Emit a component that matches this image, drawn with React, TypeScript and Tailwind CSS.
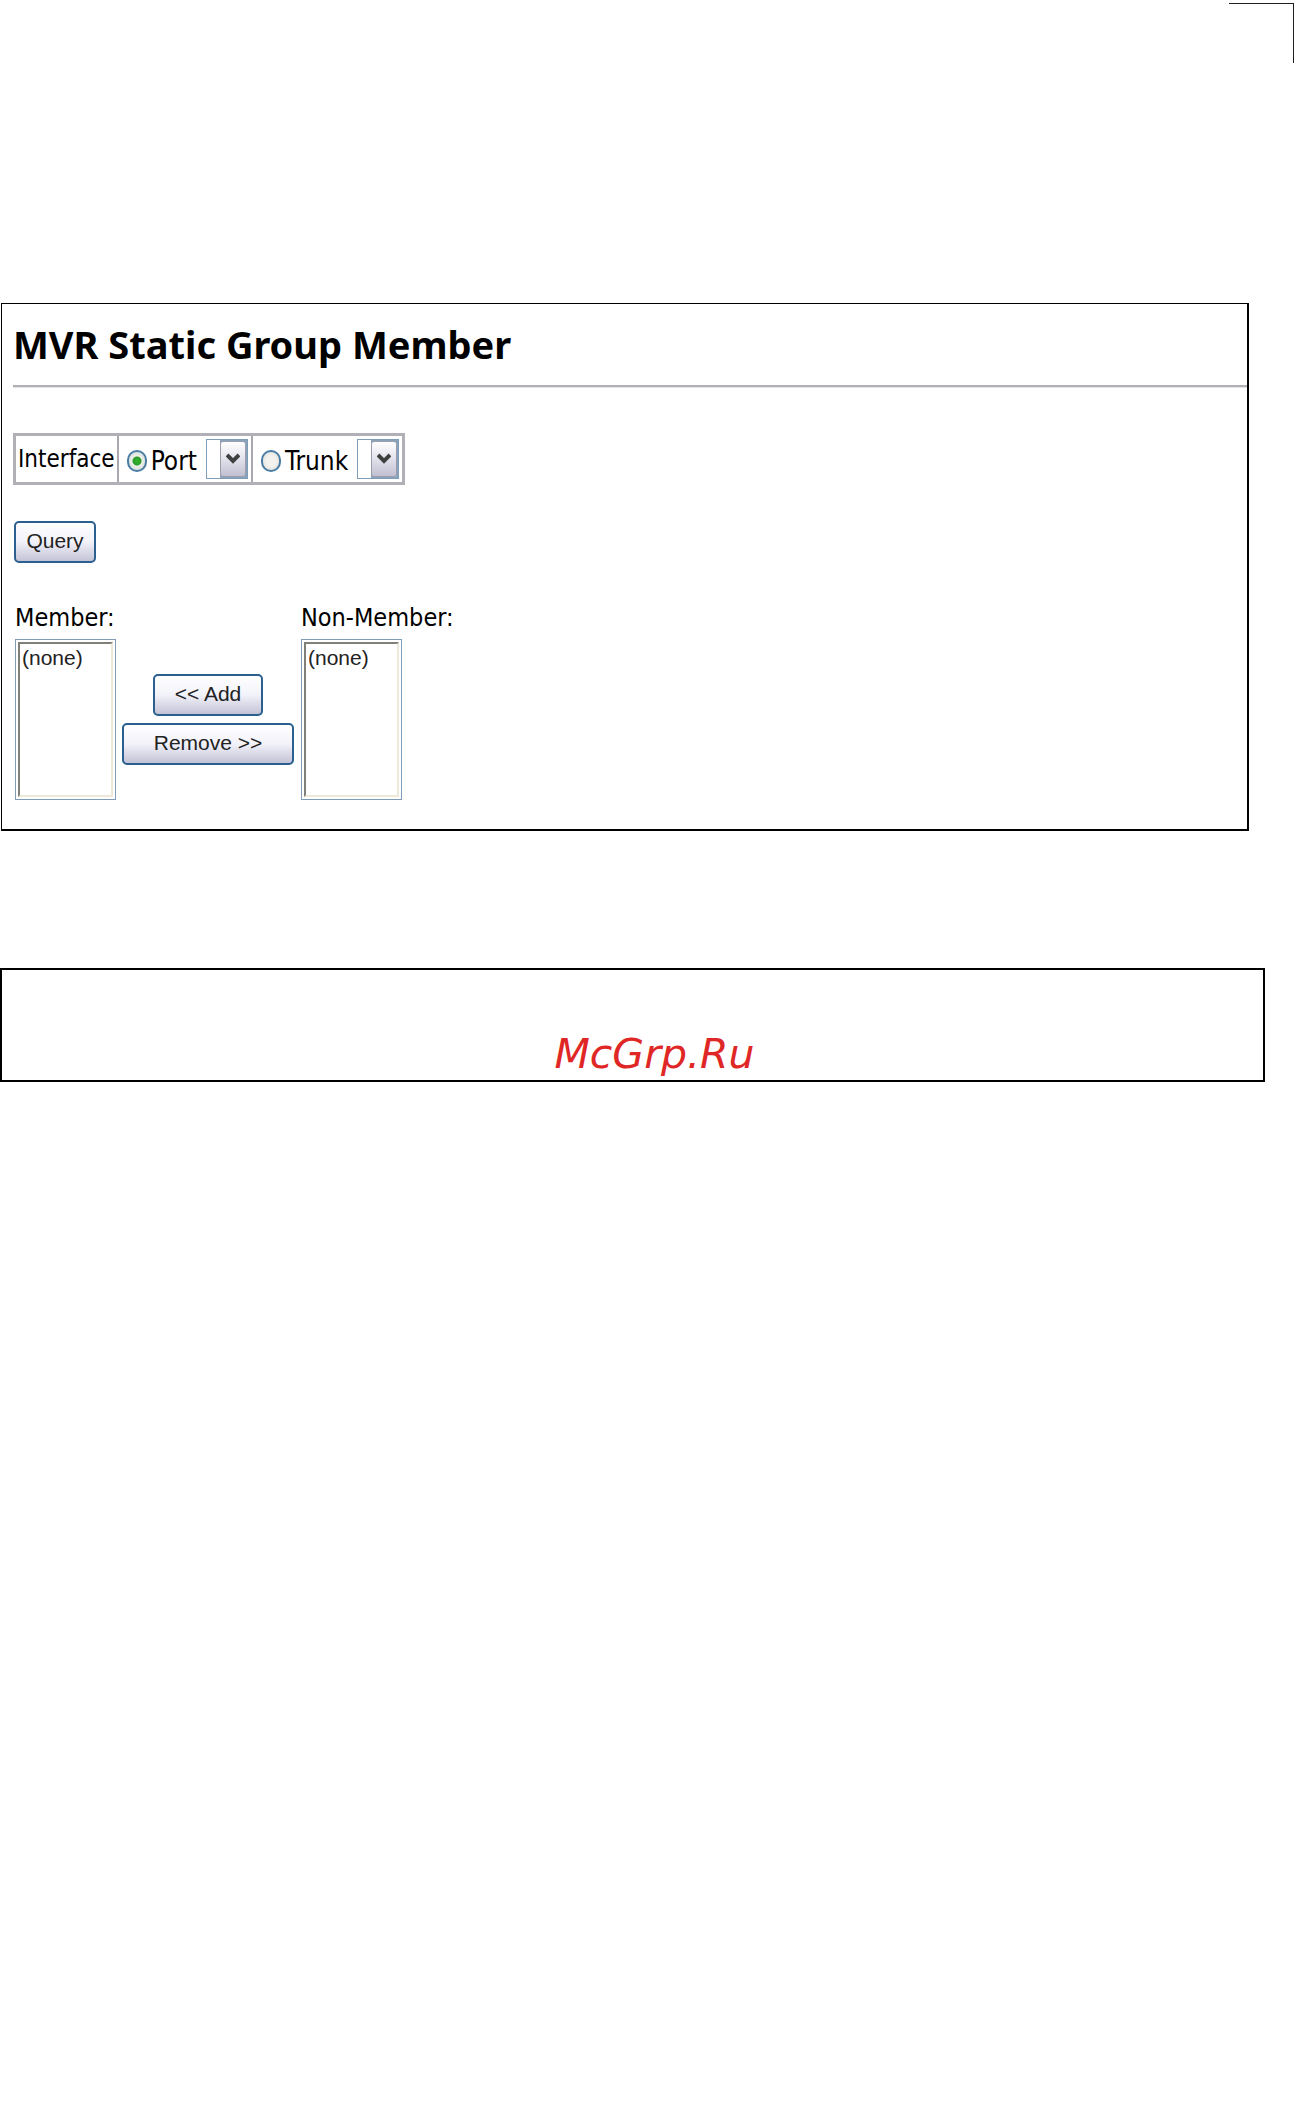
import { useState } from 'react';

const UI_FONT = "font-['DejaVu_Sans_Condensed','DejaVu_Sans',sans-serif]";
const CONTROL_FONT = "font-['Liberation_Sans',Arial,sans-serif]";

interface InterfaceOptionProps {
  id: string;
  label: string;
  checked: boolean;
  onSelect: () => void;
}

function InterfaceOption({ id, label, checked, onSelect }: InterfaceOptionProps) {
  return (
    <div className="flex items-center">
      <div className="flex items-center pt-1">
        <input
          id={id}
          type="radio"
          name="interface"
          checked={checked}
          onChange={onSelect}
          className="h-[22px] w-5 appearance-none rounded-full border-2 border-[#4a7da5] bg-[radial-gradient(#f3f2ee_40%,#dcdcd7)] checked:bg-[radial-gradient(circle,#35b52f_0,#2c9c28_4px,#eef0ea_5px,#dfe3de_8px)]"
        />
        <label htmlFor={id} className="ml-1 text-[26px] leading-7">
          {label}
        </label>
      </div>
      <div className="relative ml-[9px] h-10 w-[42px] border border-[#7f9db9] bg-white">
        <select aria-label={`${label} number`} className="h-full w-full appearance-none bg-transparent" />
        <span className="pointer-events-none absolute inset-y-0 right-0 flex w-[27px] bg-[#8aa3bd] py-px pr-px">
          <span className="flex flex-1 items-center justify-center rounded-[3px] border border-[#9c9cac] bg-linear-to-b from-white via-[#e2e2ec] to-[#c0c0d2]">
            <svg width="14" height="12" viewBox="0 0 14 12" fill="none" stroke="#404040" strokeWidth="4">
              <path d="M1 2l6 6 6-6" />
            </svg>
          </span>
        </span>
      </div>
    </div>
  );
}

function XpButton({ label, className }: { label: string; className: string }) {
  return (
    <button
      type="button"
      className={`${CONTROL_FONT} h-[42px] rounded-[5px] border-2 border-[#2b5f8f] bg-linear-to-b from-white via-[#f2f2fa] to-[#c3c3d6] pb-[2px] text-[21px] leading-6 text-[#222] ${className}`}
    >
      {label}
    </button>
  );
}

function MemberList({ id, label }: { id: string; label: string }) {
  return (
    <div className="w-[101px]">
      <label htmlFor={id} className="block text-[25px] leading-7 whitespace-nowrap">
        {label}
      </label>
      <div className="mt-[7px] h-[161px] border border-[#7f9db9] p-[2px]">
        <select
          id={id}
          size={6}
          className={`${CONTROL_FONT} h-full w-full appearance-none overflow-hidden border-2 border-t-[#808078] border-r-[#ece9d8] border-b-[#ece9d8] border-l-[#808078] text-[21px] text-[#222]`}
        >
          <option className="p-0 pt-[2px] pl-[2px] leading-7">(none)</option>
        </select>
      </div>
    </div>
  );
}

export default function App() {
  const [selected, setSelected] = useState('port');

  return (
    <div className={`${UI_FONT} min-h-screen bg-white text-black`}>
      <div className="flex justify-end pt-[3px] pr-[3px]">
        <div className="h-[60px] w-[65px] border-t border-r border-[#231f20]" />
      </div>

      <main className="mt-60 mr-12 ml-px border-t border-r-2 border-b-2 border-l border-black pt-[15px] pb-[29px] pl-[11px]">
        <h1 className="font-['Noto_Sans',sans-serif] text-[38px] leading-[50px] font-bold whitespace-nowrap">
          MVR Static Group Member
        </h1>
        <hr className="mt-4 border-t-2 border-[#b0b0b4] shadow-[0_1px_#e4e4e8]" />

        <table className="mt-[46px] border-collapse border-3 border-[#b0b0b6]">
          <tbody>
            <tr>
              <th scope="row" className="border-2 border-[#a8a8ae] px-[2px] text-2xl leading-7 font-normal">
                Interface
              </th>
              <td className="border-2 border-[#a8a8ae] py-[3px] pr-[3px] pl-2">
                <InterfaceOption
                  id="port"
                  label="Port"
                  checked={selected === 'port'}
                  onSelect={() => setSelected('port')}
                />
              </td>
              <td className="border-2 border-[#a8a8ae] py-[3px] pr-[3px] pl-2">
                <InterfaceOption
                  id="trunk"
                  label="Trunk"
                  checked={selected === 'trunk'}
                  onSelect={() => setSelected('trunk')}
                />
              </td>
            </tr>
          </tbody>
        </table>

        <XpButton label="Query" className="mt-9 ml-px w-[82px]" />

        <div className="mt-[41px] ml-[2px] flex">
          <MemberList id="member" label="Member:" />
          <div className="mt-[70px] ml-[6px] flex flex-col items-center gap-[7px]">
            <XpButton label="<< Add" className="w-[110px]" />
            <XpButton label="Remove >>" className="w-[172px]" />
          </div>
          <div className="ml-[7px]">
            <MemberList id="non-member" label="Non-Member:" />
          </div>
        </div>
      </main>

      <footer className="mt-[137px] mr-8 flex h-[114px] items-end justify-center border-2 border-black pb-[2px] pl-11 text-[#df2726]">
        <a href="#" className="font-['DejaVu_Sans',sans-serif] text-[41px] leading-[48px] italic">
          McGrp.Ru
        </a>
      </footer>
    </div>
  );
}
